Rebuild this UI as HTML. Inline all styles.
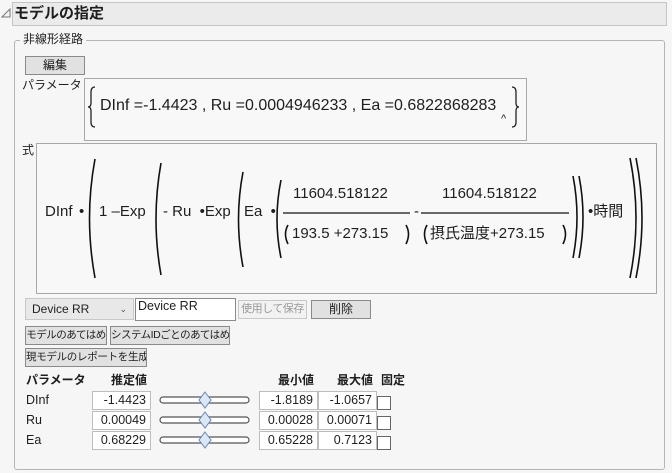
<!DOCTYPE html>
<html><head><meta charset="utf-8"><style>
body{margin:0;width:672px;height:473px;background:#f6f6f6;font-family:"Liberation Sans","Noto Sans CJK JP",sans-serif;color:#1e1e1e;position:relative;overflow:hidden;font-size:12px}
.a{position:absolute;white-space:nowrap}
.btn{position:absolute;background:#e1e1e1;border:1px solid #8a8a8a;box-sizing:border-box;font-size:10.5px;text-align:center;line-height:17px;white-space:nowrap;overflow:hidden;letter-spacing:-0.5px}
.inp{position:absolute;background:#fff;border:1px solid #bdbdbd;box-sizing:border-box;font-size:12.5px;text-align:right;padding-right:4px;line-height:16px;height:19px}
.cb{position:absolute;width:14px;height:14px;background:#fff;border:1px solid #666;box-sizing:border-box}
.f{position:absolute;font-size:15px;white-space:nowrap;line-height:18px}
</style></head><body>
<svg class="a" style="left:1px;top:8px" width="10" height="10"><path d="M1 9 L9 9 L9 1 Z" fill="none" stroke="#777" stroke-width="1"/></svg>
<div class="a" style="left:12px;top:2px;width:655px;height:24px;background:#ebebeb;border:1px solid #c4c4c4;box-sizing:border-box"></div>
<div class="a" style="left:14px;top:4px;font-size:15px;font-weight:bold;line-height:20px">モデルの指定</div>
<div class="a" style="left:14px;top:40px;width:651px;height:430px;border:1px solid #b5b5b5;border-radius:3px;box-sizing:border-box"></div>
<div class="a" style="left:20px;top:32px;background:#f6f6f6;padding:0 3px;line-height:15px;font-size:12px">非線形経路</div>
<div class="btn" style="left:25px;top:56px;width:60px;height:19px;font-size:12px;letter-spacing:0">編集</div>
<div class="a" style="left:22px;top:78px;line-height:15px">パラメータ</div>
<div class="a" style="left:84px;top:78px;width:443px;height:63px;border:1px solid #a8a8a8;background:#f8f8f8;box-sizing:border-box"></div>
<svg class="a" style="left:86px;top:86px" width="12" height="42"><path d="M9 1 Q5 1 5 6 L5 17 Q5 21 2 21 Q5 21 5 25 L5 36 Q5 41 9 41" fill="none" stroke="#222" stroke-width="1.3"/></svg>
<div class="f" style="left:100px;top:97px;font-size:16px">DInf =-1.4423 , Ru =0.0004946233 , Ea =0.6822868283</div>
<svg class="a" style="left:509px;top:86px" width="12" height="42"><path d="M3 1 Q7 1 7 6 L7 17 Q7 21 10 21 Q7 21 7 25 L7 36 Q7 41 3 41" fill="none" stroke="#222" stroke-width="1.3"/></svg>
<div class="a" style="left:501px;top:113px;font-size:11px">^</div>
<div class="a" style="left:22px;top:143px;line-height:15px">式</div>
<div class="a" style="left:36px;top:143px;width:621px;height:151px;border:1px solid #a8a8a8;background:#f8f8f8;box-sizing:border-box"></div>
<svg class="a" style="left:0;top:0" width="672" height="300" fill="none" stroke="#111" stroke-width="1.6">
<path d="M95 159 Q84 218 95 278"/>
<path d="M161 163 Q151 219 161 275"/>
<path d="M243 172 Q234 219 243 267"/>
<path d="M281 180 Q273 219 281 258"/>
<path d="M573 176 Q581 217 573 258"/><path d="M579 176 Q587 217 579 258"/>
<path d="M630 158 Q642 218 630 278"/><path d="M636 158 Q648 218 636 278"/>
<path d="M288 225 Q283 234 288 244"/><path d="M406 225 Q411 234 406 244"/>
<path d="M427 225 Q422 234 427 244"/><path d="M563 225 Q568 234 563 244"/>
<line x1="283" y1="213" x2="410" y2="213" stroke-width="1.2"/>
<line x1="421" y1="213" x2="569" y2="213" stroke-width="1.2"/>
</svg>
<div class="f" style="left:45px;top:203px">DInf</div>
<div class="f" style="left:79px;top:203px">•</div>
<div class="f" style="left:99px;top:203px">1 –Exp</div>
<div class="f" style="left:163px;top:203px">- Ru &nbsp;•Exp</div>
<div class="f" style="left:244px;top:203px">Ea &nbsp;•</div>
<div class="f" style="left:293px;top:185px">11604.518122</div>
<div class="f" style="left:292px;top:225px">193.5 +273.15</div>
<div class="f" style="left:414px;top:203px">-</div>
<div class="f" style="left:442px;top:185px">11604.518122</div>
<div class="f" style="left:430px;top:225px">摂氏温度+273.15</div>
<div class="f" style="left:588px;top:203px">•時間</div>
<div class="a" style="left:25px;top:298px;width:109px;height:22px;background:#e8e8e8;border:1px solid #c8c8c8;box-sizing:border-box;line-height:20px;padding-left:6px;font-size:12px">Device RR<span style="position:absolute;right:6px;font-size:9px;color:#555">⌄</span></div>
<div class="a" style="left:135px;top:298px;width:101px;height:23px;background:#fff;border:1px solid #8a8a8a;box-sizing:border-box;padding-left:2px;line-height:14px;font-size:12.5px">Device RR</div>
<div class="btn" style="left:238px;top:300px;width:69px;height:19px;color:#9a9a9a;background:#f2f2f2;border-color:#c8c8c8;font-size:11px">使用して保存</div>
<div class="btn" style="left:311px;top:300px;width:60px;height:19px;font-size:12px;letter-spacing:0">削除</div>
<div class="btn" style="left:25px;top:326px;width:82px;height:19px">モデルのあてはめ</div>
<div class="btn" style="left:110px;top:326px;width:120px;height:19px">システムIDごとのあてはめ</div>
<div class="btn" style="left:25px;top:348px;width:122px;height:19px;font-size:10.5px;letter-spacing:-0.3px">現モデルのレポートを生成</div>
<div class="a" style="left:26px;top:373px;font-weight:bold;line-height:15px">パラメータ</div>
<div class="a" style="left:111px;top:373px;font-weight:bold;line-height:15px">推定値</div>
<div class="a" style="left:278px;top:373px;font-weight:bold;line-height:15px">最小値</div>
<div class="a" style="left:337px;top:373px;font-weight:bold;line-height:15px">最大値</div>
<div class="a" style="left:381px;top:373px;font-weight:bold;line-height:15px">固定</div>
<div class="a" style="left:26px;top:392px;font-size:12.5px;line-height:16px">DInf</div>
<div class="a" style="left:26px;top:412px;font-size:12.5px;line-height:16px">Ru</div>
<div class="a" style="left:26px;top:432px;font-size:12.5px;line-height:16px">Ea</div>
<div class="inp" style="left:92px;top:391px;width:59px">-1.4423</div>
<div class="inp" style="left:92px;top:411px;width:59px">0.00049</div>
<div class="inp" style="left:92px;top:431px;width:59px">0.68229</div>
<div class="inp" style="left:259px;top:391px;width:59px">-1.8189</div>
<div class="inp" style="left:259px;top:411px;width:59px">0.00028</div>
<div class="inp" style="left:259px;top:431px;width:59px">0.65228</div>
<div class="inp" style="left:318px;top:391px;width:59px">-1.0657</div>
<div class="inp" style="left:318px;top:411px;width:59px">0.00071</div>
<div class="inp" style="left:318px;top:431px;width:59px">0.7123</div>
<div class="cb" style="left:377px;top:396px"></div>
<div class="cb" style="left:377px;top:416px"></div>
<div class="cb" style="left:377px;top:436px"></div>
<svg class="a" style="left:158px;top:390px" width="94" height="60">
<g fill="#fff" stroke="#555" stroke-width="1.2">
<rect x="2" y="7" width="89" height="6" rx="3"/><rect x="2" y="27" width="89" height="6" rx="3"/><rect x="2" y="47" width="89" height="6" rx="3"/></g>
<g fill="#dbe7f5" stroke="#6a8ab5" stroke-width="1">
<path d="M47 2 L53 10 L47 18 L41 10 Z"/><path d="M47 22 L53 30 L47 38 L41 30 Z"/><path d="M47 42 L53 50 L47 58 L41 50 Z"/></g>
</svg>
</body></html>
